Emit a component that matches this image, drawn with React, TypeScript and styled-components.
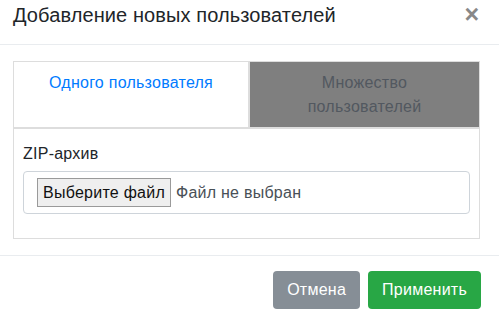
import React from "react";
import styled, { createGlobalStyle } from "styled-components";

const Global = createGlobalStyle`
  html, body { margin: 0; padding: 0; background: #fff; }
  body { font-family: "Liberation Sans", Arial, sans-serif; color: #212529; }
  * { box-sizing: border-box; }
`;

const Modal = styled.div`
  width: 499px;
  height: 323px;
  display: flex;
  flex-direction: column;
  background: #fff;
`;

const Header = styled.div`
  height: 45px;
  display: flex;
  align-items: flex-start;
  justify-content: space-between;
  padding: 3px 20px 0 13px;
  border-bottom: 1px solid #e9ecef;
`;

const Title = styled.h5`
  margin: 0;
  font-size: 20px;
  line-height: 24px;
  font-weight: 400;
  letter-spacing: 0.1px;
  color: #212529;
`;

const Close = styled.span`
  font-size: 25px;
  font-weight: 700;
  color: #888;
  line-height: 22px;
`;

const Body = styled.div`
  flex: 1;
  padding: 16px 19px 16px 13px;
  border-bottom: 1px solid #e9ecef;
`;

const Card = styled.div`
  border: 1px solid #ddd;
  height: 178px;
  display: flex;
  flex-direction: column;
`;

const Tabs = styled.div`
  display: grid;
  grid-template-columns: 234px 1fr;
  height: 67px;
  border-bottom: 2px solid #ddd;
`;

const Tab = styled.div<{ $active?: boolean }>`
  display: flex;
  align-items: flex-start;
  justify-content: center;
  text-align: center;
  padding-top: 9px;
  font-size: 16px;
  line-height: 24px;
  letter-spacing: 0.25px;
  color: ${(p) => (p.$active ? "#007bff" : "#525860")};
  background: ${(p) => (p.$active ? "#fff" : "#7f7f7f")};
  border-left: ${(p) => (p.$active ? "none" : "2px solid #ddd")};
`;

const Pane = styled.div`
  padding: 15px 9px 14px;
`;

const Label = styled.div`
  font-size: 16px;
  line-height: 20px;
  letter-spacing: 0.25px;
  color: #212529;
  margin-bottom: 7px;
`;

const FileBox = styled.div`
  height: 43px;
  border: 1px solid #ced4da;
  border-radius: 4px;
  display: flex;
  align-items: center;
  padding-left: 13px;
  font-size: 16px;
  letter-spacing: 0.25px;
`;

const FileButton = styled.span`
  display: inline-flex;
  align-items: center;
  height: 29px;
  padding: 0 5px;
  background: #efefef;
  border: 1px solid #9a9a9a;
  color: #111;
  margin-right: 5px;
`;

const FileName = styled.span`
  color: #495057;
`;

const Footer = styled.div`
  height: 67px;
  display: flex;
  align-items: center;
  justify-content: flex-end;
  gap: 8px;
  padding-right: 18px;
`;

const Button = styled.button<{ $variant: "secondary" | "success" }>`
  height: 38px;
  border: none;
  border-radius: 4px;
  padding: 0 14px;
  font-family: inherit;
  font-size: 16px;
  letter-spacing: 0.25px;
  color: #fff;
  background: ${(p) => (p.$variant === "success" ? "#28a745" : "#868e96")};
`;

export default function App() {
  return (
    <>
      <Global />
      <Modal>
        <Header>
          <Title>Добавление новых пользователей</Title>
          <Close>×</Close>
        </Header>
        <Body>
          <Card>
            <Tabs>
              <Tab $active>Одного пользователя</Tab>
              <Tab>
                Множество
                <br />
                пользователей
              </Tab>
            </Tabs>
            <Pane>
              <Label>ZIP-архив</Label>
              <FileBox>
                <FileButton>Выберите файл</FileButton>
                <FileName>Файл не выбран</FileName>
              </FileBox>
            </Pane>
          </Card>
        </Body>
        <Footer>
          <Button $variant="secondary">Отмена</Button>
          <Button $variant="success">Применить</Button>
        </Footer>
      </Modal>
    </>
  );
}
